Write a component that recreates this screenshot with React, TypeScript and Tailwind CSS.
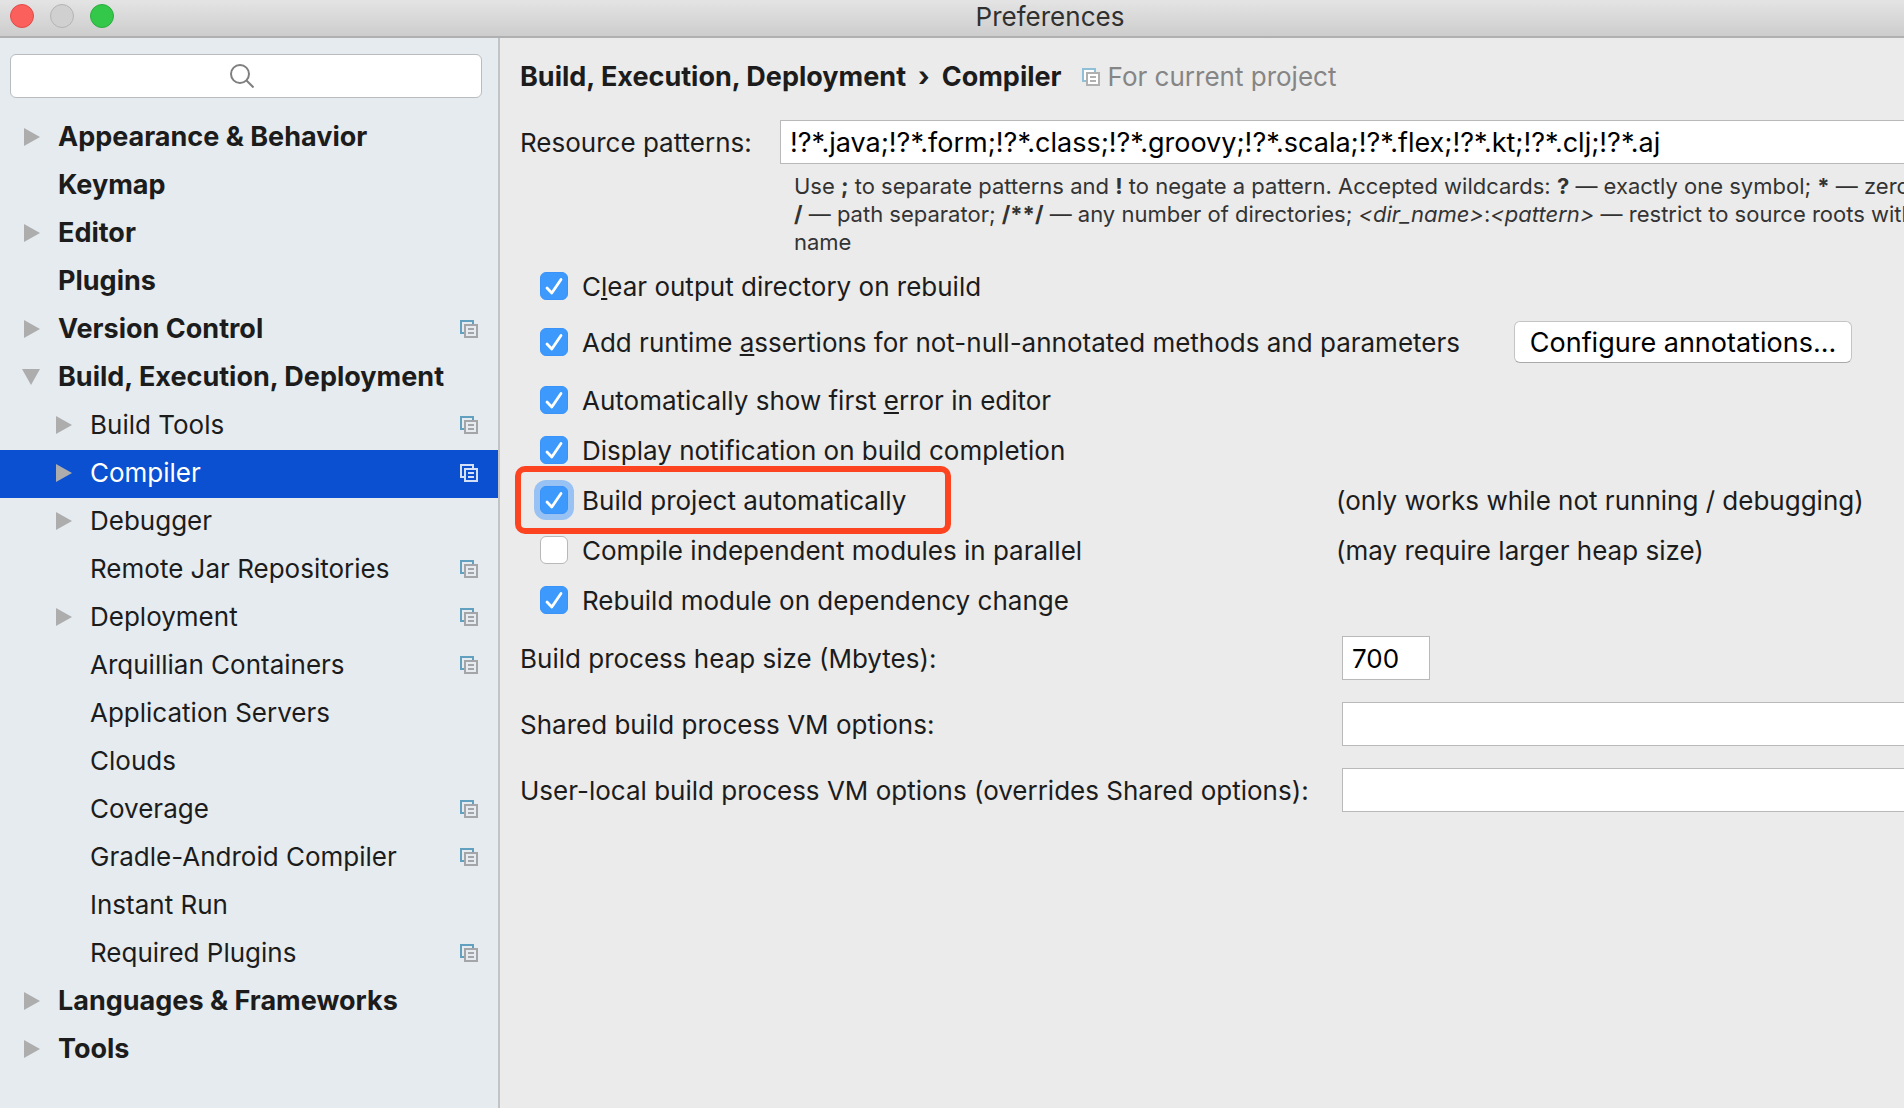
import React, { useState } from "react";

type TreeItem = {
  label: string;
  level: 0 | 1;
  arrow?: "right" | "down";
  project?: boolean;
  selected?: boolean;
};

const items: TreeItem[] = [
  { label: "Appearance & Behavior", level: 0, arrow: "right" },
  { label: "Keymap", level: 0 },
  { label: "Editor", level: 0, arrow: "right" },
  { label: "Plugins", level: 0 },
  { label: "Version Control", level: 0, arrow: "right", project: true },
  { label: "Build, Execution, Deployment", level: 0, arrow: "down" },
  { label: "Build Tools", level: 1, arrow: "right", project: true },
  { label: "Compiler", level: 1, arrow: "right", project: true, selected: true },
  { label: "Debugger", level: 1, arrow: "right" },
  { label: "Remote Jar Repositories", level: 1, project: true },
  { label: "Deployment", level: 1, arrow: "right", project: true },
  { label: "Arquillian Containers", level: 1, project: true },
  { label: "Application Servers", level: 1 },
  { label: "Clouds", level: 1 },
  { label: "Coverage", level: 1, project: true },
  { label: "Gradle-Android Compiler", level: 1, project: true },
  { label: "Instant Run", level: 1 },
  { label: "Required Plugins", level: 1, project: true },
  { label: "Languages & Frameworks", level: 0, arrow: "right" },
  { label: "Tools", level: 0, arrow: "right" },
];

function ProjectIcon({ back, front, fill = "none" }: { back: string; front: string; fill?: string }) {
  return (
    <svg width="18" height="18" viewBox="0 0 18 18" fill={fill} strokeWidth="2" className="shrink-0" aria-hidden="true">
      <path d="M4 13H1V1h12v3" stroke={back} />
      <path d="M5 5h12v12H5z" stroke={front} />
      <path d="M8 9h6M8 13h6" stroke={front} />
    </svg>
  );
}

function Arrow({ direction }: { direction?: "right" | "down" }) {
  return (
    <svg width="18" height="18" viewBox="0 0 18 18" className="shrink-0" fill="#adadad" aria-hidden="true">
      {direction === "right" && <path d="M2 0l16 9-16 9z" />}
      {direction === "down" && <path d="M0 1h18l-9 16z" />}
    </svg>
  );
}

function TreeRow({ item }: { item: TreeItem }) {
  return (
    <li>
      <button
        type="button"
        className={
          "flex h-12 w-full items-center gap-[18px] pr-5 pb-[2px] text-left " +
          (item.level === 0 ? "pl-[22px] text-[27px] font-bold " : "pl-[54px] ") +
          (item.selected ? "bg-[#0a50d0] text-white" : "text-[#1c1c1c]")
        }
      >
        <Arrow direction={item.arrow} />
        <span className="grow whitespace-nowrap">{item.label}</span>
        {item.project && (
          <ProjectIcon
            back={item.selected ? "#d3e0f7" : "#62a0c0"}
            front={item.selected ? "#d3e0f7" : "#a3a5a8"}
          />
        )}
      </button>
    </li>
  );
}

function CheckOption({
  id,
  initial = true,
  focused = false,
  children,
}: {
  id: string;
  initial?: boolean;
  focused?: boolean;
  children: React.ReactNode;
}) {
  const [on, setOn] = useState(initial);
  return (
    <div className="flex items-center gap-[14px] pl-5">
      <span className="grid size-7 shrink-0">
        <input
          id={id}
          type="checkbox"
          checked={on}
          onChange={(e) => setOn(e.target.checked)}
          className={
            "col-start-1 row-start-1 size-7 appearance-none rounded-md border border-[#b8b8b8] bg-white checked:border-[#3a93f8] checked:bg-[#3d99fc] " +
            (focused ? "ring-[6px] ring-[#97c2f3]" : "")
          }
        />
        {on && (
          <svg viewBox="0 0 28 28" className="pointer-events-none col-start-1 row-start-1 size-7" fill="none" aria-hidden="true">
            <path d="M7 16l4.800 5L21 7.500" stroke="#fff" strokeWidth="2.800" strokeLinecap="round" strokeLinejoin="round" />
          </svg>
        )}
      </span>
      <label htmlFor={id} className="pt-[2px] whitespace-nowrap">
        {children}
      </label>
    </div>
  );
}

function Key({ children }: { children: string }) {
  return <span className="underline decoration-2 underline-offset-2 [text-decoration-skip-ink:none]">{children}</span>;
}

const field = "h-11 border border-[#b9b9b9] bg-white px-[9px] text-black outline-none";

export default function App() {
  return (
    <div className="flex min-h-screen flex-col overflow-hidden bg-[#ebebeb] font-[Inter,'Liberation_Sans',sans-serif] text-[26px] leading-8 text-[#1c1c1c]">
      <header className="flex h-[38px] items-center border-b-2 border-[#b0b0b0] bg-linear-to-b from-[#e4e4e4] to-[#cdcdcd] pb-1">
        <div className="flex gap-4 pl-[10px]">
          <button type="button" aria-label="Close" className="size-6 rounded-full border border-[#e04b48] bg-[#fc605c]" />
          <button type="button" aria-label="Minimize" className="size-6 rounded-full border border-[#b4b4b4] bg-[#d0d0d0]" />
          <button type="button" aria-label="Zoom" className="size-6 rounded-full border border-[#2cac3f] bg-[#34c84a]" />
        </div>
        <h1 className="grow pt-[2px] pl-[82px] text-center text-[#303030]">Preferences</h1>
      </header>

      <div className="flex grow">
        <aside className="w-[500px] shrink-0 border-r-2 border-[#c2c3c5] bg-[#e5ebef]">
          <div className="grid px-[10px] pt-4 pb-4">
            <input
              type="search"
              aria-label="Search settings"
              className="col-start-1 row-start-1 mr-[6px] h-11 rounded-md border border-[#b9bcbe] bg-white px-3 outline-none"
            />
            <svg
              width="24"
              height="24"
              viewBox="0 0 24 24"
              className="pointer-events-none col-start-1 row-start-1 mr-[14px] place-self-center"
              fill="none"
              stroke="#7f7f7f"
              strokeWidth="2"
              aria-hidden="true"
            >
              <circle cx="10" cy="10" r="9" />
              <path d="M16.500 16.500L23.500 23.500" />
            </svg>
          </div>
          <nav aria-label="Settings">
            <ul>
              {items.map((item) => (
                <TreeRow key={item.label} item={item} />
              ))}
            </ul>
          </nav>
        </aside>

        <main className="min-w-0 grow overflow-hidden pt-[23px] pl-5">
          <div className="flex items-center whitespace-nowrap">
            <h2 className="flex gap-3 text-[27px] font-bold">
              <span>Build, Execution, Deployment</span>
              <span>›</span>
              <span>Compiler</span>
            </h2>
            <div className="flex items-center gap-2 pl-5 text-[#858585]">
              <ProjectIcon back="#8fc0d8" front="#b0b0b0" fill="#fff" />
              <span>For current project</span>
            </div>
          </div>

          <div className="mt-[27px] flex items-center">
            <label htmlFor="patterns" className="w-[260px] shrink-0 pt-[2px] whitespace-nowrap">
              Resource patterns:
            </label>
            <input
              id="patterns"
              type="text"
              defaultValue="!?*.java;!?*.form;!?*.class;!?*.groovy;!?*.scala;!?*.flex;!?*.kt;!?*.clj;!?*.aj"
              className={field + " min-w-0 grow border-r-0 text-[27px]"}
            />
          </div>
          <p className="mt-2 pl-[274px] text-[22px] leading-7 whitespace-nowrap text-[#333]">
            Use <b>;</b> to separate patterns and <b>!</b> to negate a pattern. Accepted wildcards: <b>?</b> — exactly one
            symbol; <b>*</b> — zero or more symbols;
            <br />
            <b>/</b> — path separator; <b>/**/</b> — any number of directories; <i>&lt;dir_name&gt;</i>:
            <i>&lt;pattern&gt;</i> — restrict to source roots with the specified
            <br />
            name
          </p>

          <div className="mt-[5px] flex h-[50px] items-center">
            <CheckOption id="clear">
              C<Key>l</Key>ear output directory on rebuild
            </CheckOption>
          </div>
          <div className="mt-[6px] grid h-[50px] grid-cols-[994px_338px] items-center">
            <CheckOption id="assertions">
              Add runtime <Key>a</Key>ssertions for not-null-annotated methods and parameters
            </CheckOption>
            <button
              type="button"
              className="h-[42px] rounded-md border border-[#c4c4c4] border-b-[#a9a9a9] bg-white pt-[2px] text-[27px] whitespace-nowrap text-black"
            >
              Configure annotations...
            </button>
          </div>
          <div className="mt-2 flex h-[50px] items-center">
            <CheckOption id="first-error">
              Automatically show first <Key>e</Key>rror in editor
            </CheckOption>
          </div>
          <div className="flex h-[50px] items-center">
            <CheckOption id="notify">Display notification on build completion</CheckOption>
          </div>
          <div className="relative grid h-[50px] grid-cols-[816px_1fr] items-center whitespace-nowrap">
            <CheckOption id="auto-build" focused>
              Build project automatically
            </CheckOption>
            <span className="pt-[2px]">(only works while not running / debugging)</span>
            <div className="pointer-events-none absolute -top-[9px] -left-[5px] h-[68px] w-[436px] rounded-[10px] border-[6px] border-[#fc4421]" />
          </div>
          <div className="grid h-[50px] grid-cols-[816px_1fr] items-center whitespace-nowrap">
            <CheckOption id="parallel" initial={false}>
              Compile independent modules in parallel
            </CheckOption>
            <span className="pt-[2px]">(may require larger heap size)</span>
          </div>
          <div className="flex h-[50px] items-center">
            <CheckOption id="dependency">Rebuild module on dependency change</CheckOption>
          </div>

          <div className="mt-[11px] grid grid-cols-[822px_1fr] items-center gap-y-[22px] whitespace-nowrap">
            <label htmlFor="heap" className="pt-[2px]">Build process heap size (Mbytes):</label>
            <input id="heap" type="text" defaultValue="700" className={field + " w-[88px]"} />
            <label htmlFor="shared" className="pt-[2px]">Shared build process VM options:</label>
            <input id="shared" type="text" className={field + " w-full border-r-0"} />
            <label htmlFor="local" className="pt-[2px]">User-local build process VM options (overrides Shared options):</label>
            <input id="local" type="text" className={field + " w-full border-r-0"} />
          </div>
        </main>
      </div>
    </div>
  );
}
